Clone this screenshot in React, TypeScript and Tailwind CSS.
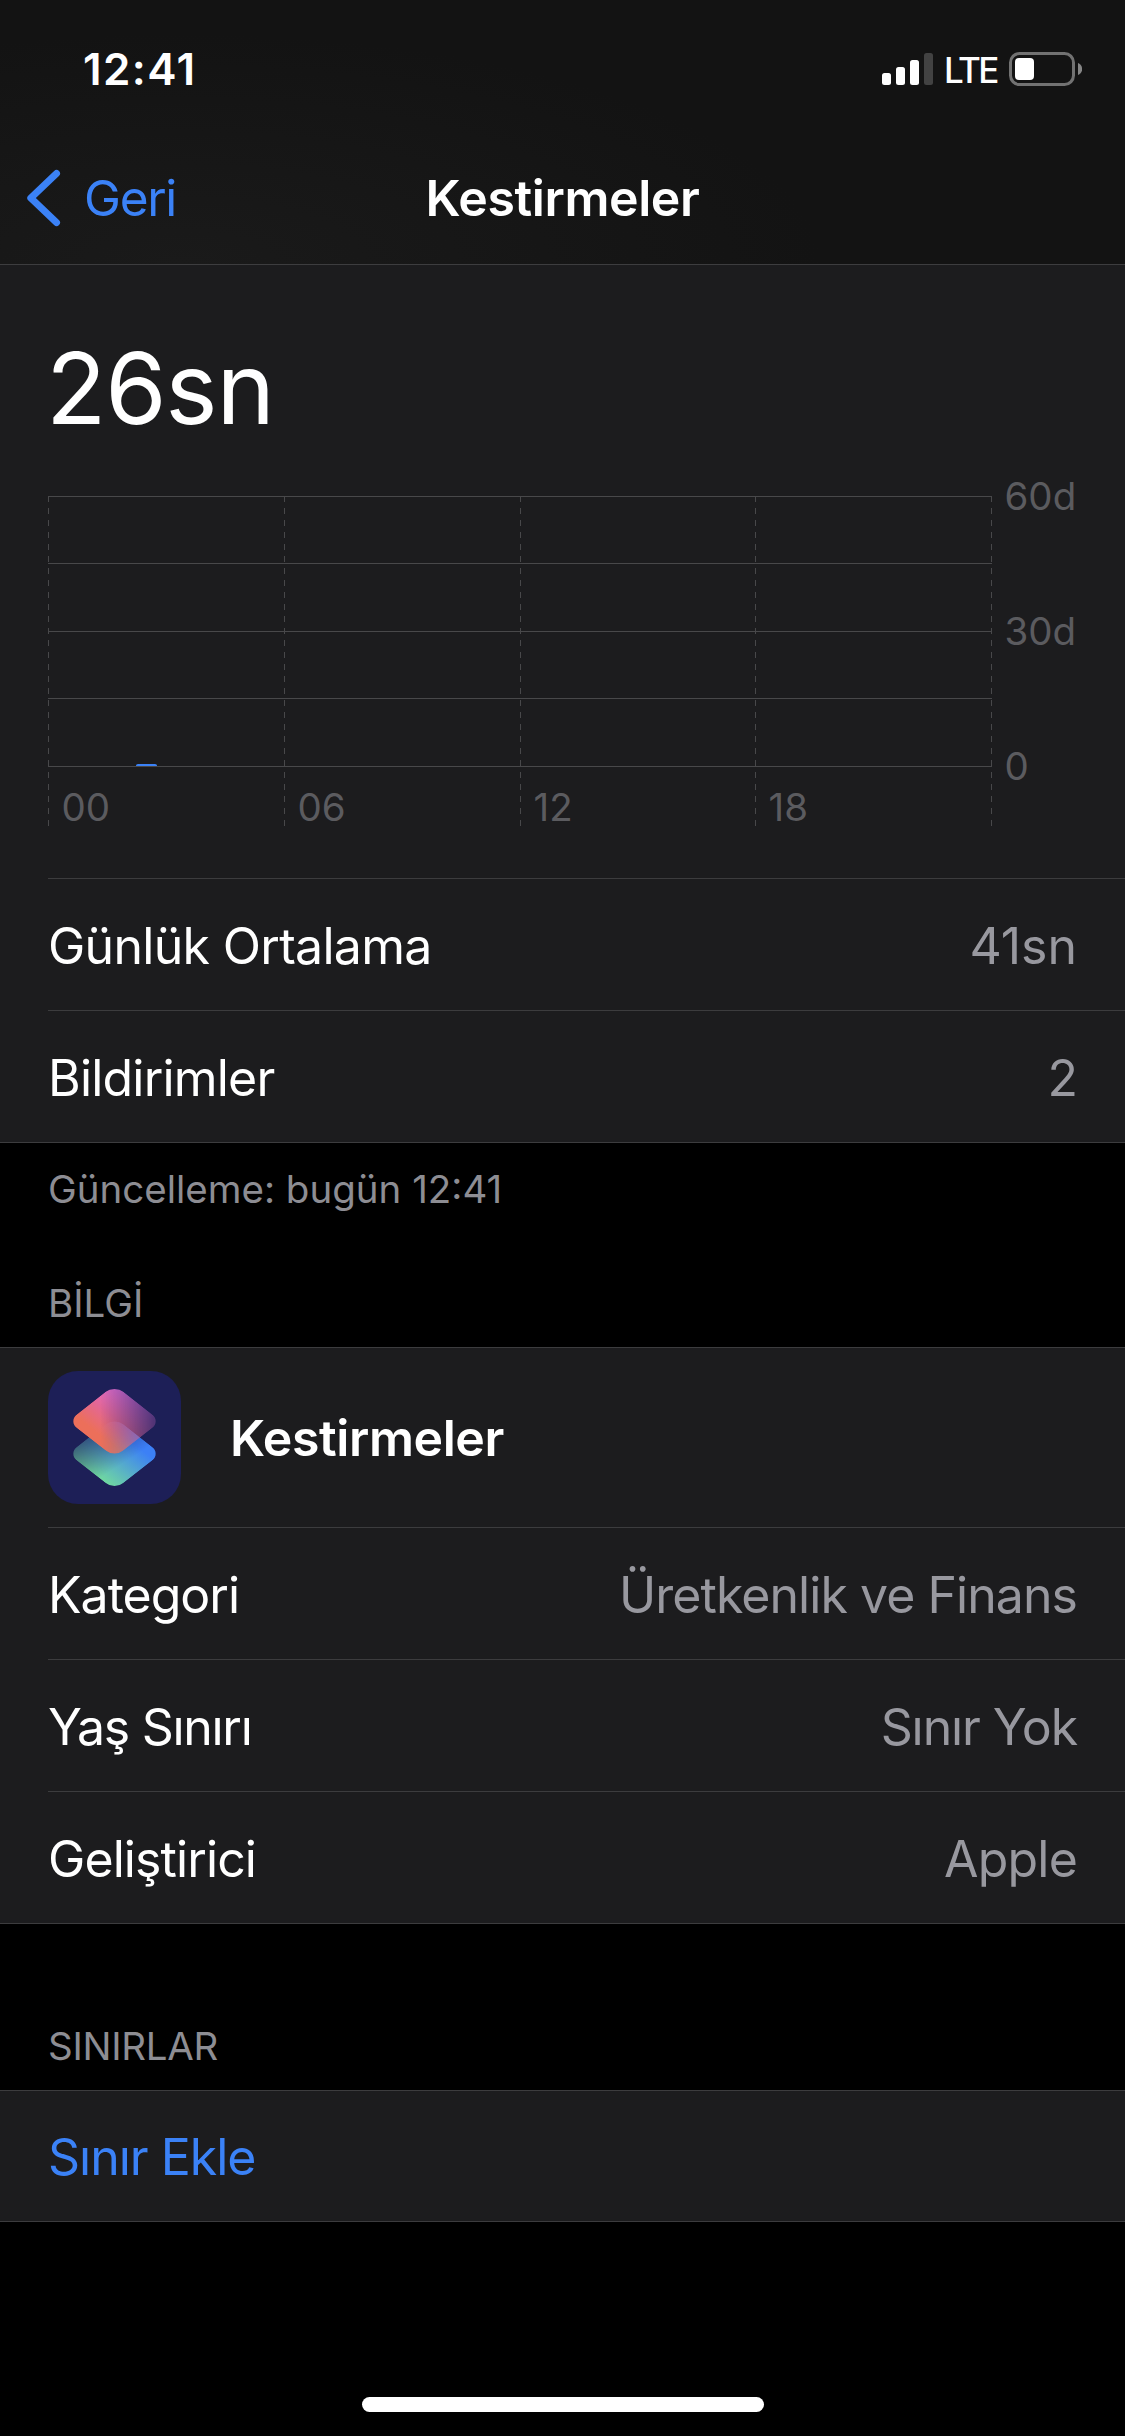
import React from 'react';
import clsx from 'clsx';

const HOURS = ['00', '06', '12', '18'];
const GRID_X = [0.5, 236.5, 472.5, 707.5, 943.5];
const GRID_Y = [18.5, 85.5, 153.5, 220.5, 288.5];

const StatusBar: React.FC = () => (
  <div className="flex h-[132px] items-center justify-between pt-[6px] pl-[83px] pr-[43px]">
    <span className="text-[44px] leading-none font-semibold tracking-[1.4px]">12:41</span>
    <div className="flex items-center">
      {/* Signal strength */}
      <svg width="51" height="32" viewBox="0 0 51 32" fill="#fff">
        <rect x="0" y="20" width="9" height="12" rx="2.5" />
        <rect x="14" y="14" width="9" height="18" rx="2.5" />
        <rect x="28" y="7" width="9" height="25" rx="2.5" />
        <rect x="42" y="0" width="9" height="32" rx="2.5" fill="#424242" />
      </svg>
      <span className="ml-[11px] w-[53px] pt-[3px] text-[35px] leading-none font-medium tracking-[-2.6px]">
        LTE
      </span>
      {/* Battery */}
      <svg className="ml-[12px]" width="73" height="34" viewBox="0 0 73 34">
        <rect x="1.5" y="1.5" width="63" height="31" rx="9" fill="none" stroke="#727272" strokeWidth="3" />
        <rect x="6" y="6" width="19" height="22" rx="4" fill="#fff" />
        <path d="M69 11c2.6 1 4.2 3.3 4.2 6s-1.6 5-4.2 6z" fill="#868686" />
      </svg>
    </div>
  </div>
);

const NavBar: React.FC = () => (
  <div className="grid h-[132px] grid-cols-[1fr_auto_1fr] items-center">
    <button className="flex items-center pl-[26px] text-[#3b82f7]">
      <svg width="35" height="58" viewBox="0 0 35 58" fill="none">
        <path
          d="M30.5 4.5 4.8 29 30.5 53.500"
          stroke="currentColor"
          strokeWidth="7"
          strokeLinecap="round"
          strokeLinejoin="round"
        />
      </svg>
      <span className="ml-[23px] pt-[2px] text-[49.5px] leading-none tracking-[-1.3px]">Geri</span>
    </button>
    <h1 className="text-[50px] leading-none font-semibold tracking-[-0.4px]">Kestirmeler</h1>
    <span />
  </div>
);

const UsageChart: React.FC = () => (
  <svg className="block overflow-visible" width="1077" height="400" viewBox="0 0 1077 400">
    <g stroke="#48484a" strokeWidth="1">
      {GRID_Y.map((y) => (
        <line key={y} x1="0" x2="944" y1={y} y2={y} />
      ))}
      {GRID_X.map((x) => (
        <line key={x} x1={x} x2={x} y1="18" y2="348" strokeDasharray="6 6" />
      ))}
    </g>
    <path d="M88 288v-.5q0-1.500 2-1.500h17q2 0 2 1.500v.5z" fill="#3b82f7" />
    <g fill="#5b5b5f" fontSize="38.500">
      {HOURS.map((hour, i) => (
        <text key={hour} x={GRID_X[i] + 13} y="343">
          {hour}
        </text>
      ))}
      <text x="956.500" y="32">60d</text>
      <text x="956.500" y="167">30d</text>
      <text x="956.500" y="302">0</text>
    </g>
  </svg>
);

const ShortcutsIcon: React.FC = () => (
  <svg width="133" height="133" viewBox="0 0 133 133">
    <defs>
      <linearGradient id="warm" x1="0" y1="1" x2="0" y2="0">
        <stop offset="0.15" stopColor="#ec6f5a" />
        <stop offset="0.55" stopColor="#e36796" />
        <stop offset="1" stopColor="#e26fd8" />
      </linearGradient>
      <linearGradient id="warmFade" x1="0" y1="1" x2="1" y2="0">
        <stop offset="0.35" stopColor="#fff" />
        <stop offset="0.92" stopColor="#fff" stopOpacity="0.28" />
      </linearGradient>
      <linearGradient id="cool" x1="0" y1="0" x2="0" y2="1">
        <stop offset="0.15" stopColor="#3c80f6" />
        <stop offset="1" stopColor="#70d8a0" />
      </linearGradient>
      <linearGradient id="coolFade" x1="0" y1="0.2" x2="1" y2="0.3">
        <stop offset="0" stopColor="#fff" stopOpacity="0.35" />
        <stop offset="0.75" stopColor="#fff" />
      </linearGradient>
      <mask id="warmMask" maskContentUnits="objectBoundingBox">
        <rect width="1" height="1" fill="url(#warmFade)" />
      </mask>
      <mask id="coolMask" maskContentUnits="objectBoundingBox">
        <rect width="1" height="1" fill="url(#coolFade)" />
      </mask>
    </defs>
    <rect width="133" height="133" rx="30" fill="#1d1f57" />
    <g transform="translate(66.5 82.7) scale(1 .784) rotate(45)">
      <rect x="-32.8" y="-32.8" width="65.6" height="65.6" rx="12.6" fill="url(#cool)" mask="url(#coolMask)" />
    </g>
    <g transform="translate(66.5 50.2) scale(1 .784) rotate(45)">
      <rect x="-32.8" y="-32.8" width="65.6" height="65.6" rx="12.6" fill="url(#warm)" mask="url(#warmMask)" />
    </g>
  </svg>
);

interface RowProps {
  label: string;
  value?: string;
  labelClass?: string;
  valueClass?: string;
  last?: boolean;
}

const Row: React.FC<RowProps> = ({ label, value, labelClass, valueClass, last }) => (
  <div className={clsx(last ? 'border-b border-[#3c3c3e]' : 'pl-[48px]')}>
    <div
      className={clsx(
        'flex items-center justify-between pt-[3px] pr-[48px] text-[50px] leading-none',
        last ? 'h-[131px] pl-[48px]' : 'h-[132px] border-b border-[#3c3c3e]'
      )}
    >
      <span className={labelClass}>{label}</span>
      {value && <span className={clsx('text-[#98989f]', valueClass)}>{value}</span>}
    </div>
  </div>
);

const App: React.FC = () => {
  return (
    <div className="flex h-[2436px] w-[1125px] flex-col overflow-hidden bg-black font-['Inter','Liberation_Sans',sans-serif] text-white">
      <header className="border-b border-[#3d3d3f] bg-[#131313] bg-[radial-gradient(ellipse_640px_230px_at_180px_264px,#1a1a1a,#131313)]">
        <StatusBar />
        <NavBar />
      </header>

      {/* Usage */}
      <section className="bg-[#1c1c1e]">
        <div className="flex h-[213px] items-center pt-[33px] pl-[46px] text-[99px] leading-none tracking-[-1.2px]">
          26sn
        </div>
        <div className="pl-[48px]">
          <div className="border-b border-[#3c3c3e]">
            <UsageChart />
          </div>
        </div>
        <Row label="Günlük Ortalama" value="41sn" labelClass="tracking-[-0.7px]" />
        <Row label="Bildirimler" value="2" labelClass="tracking-[-0.8px]" valueClass="-mr-px" last />
      </section>

      <p className="flex h-[92px] items-center pl-[48px] text-[38.5px] leading-none text-[#8d8d93]">
        Güncelleme: bugün 12:41
      </p>

      {/* Info */}
      <h2 className="flex h-[112px] items-center pt-[24px] pl-[48px] text-[38.5px] leading-none text-[#8d8d93]">
        BİLGİ
      </h2>
      <section className="border-t border-[#3c3c3e] bg-[#1c1c1e]">
        <div className="pl-[48px]">
          <div className="flex h-[180px] items-center gap-[49px] border-b border-[#3c3c3e]">
            <ShortcutsIcon />
            <span className="text-[50px] leading-none font-semibold tracking-[-0.4px]">Kestirmeler</span>
          </div>
        </div>
        <Row
          label="Kategori"
          value="Üretkenlik ve Finans"
          labelClass="tracking-[-1px]"
          valueClass="tracking-[-0.95px]"
        />
        <Row label="Yaş Sınırı" value="Sınır Yok" labelClass="tracking-[-1.3px]" valueClass="tracking-[-1.1px]" />
        <Row
          label="Geliştirici"
          value="Apple"
          labelClass="tracking-[-0.9px]"
          valueClass="tracking-[-0.8px]"
          last
        />
      </section>

      {/* Limits */}
      <h2 className="flex h-[166px] items-center pt-[78px] pl-[48px] text-[38.5px] leading-none tracking-[-0.3px] text-[#8d8d93]">
        SINIRLAR
      </h2>
      <section className="border-y border-[#3c3c3e] bg-[#1c1c1e]">
        <button className="flex h-[130px] w-full items-center pt-[1px] pl-[48px] text-[50px] leading-none tracking-[-1px] text-[#3b82f7]">
          Sınır Ekle
        </button>
      </section>

      {/* Home indicator */}
      <div className="flex flex-1 items-end justify-center pb-[24px]">
        <div className="h-[15px] w-[402px] rounded-full bg-white" />
      </div>
    </div>
  );
};

export default App;
